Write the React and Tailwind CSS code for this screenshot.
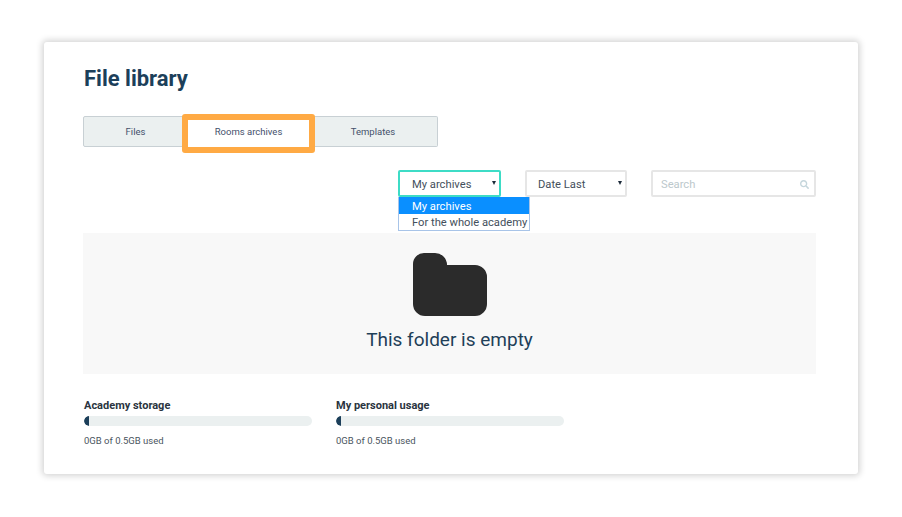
import React from "react";
import { FaSearch } from "react-icons/fa";

const UsageBar = ({ label }) => (
  <div className="w-[228px]">
    <p className="text-[11px] leading-[14px] font-bold text-[#2a3440]">{label}</p>
    <div className="mt-[3px] h-[10px] rounded-full bg-[#ebf0f0] overflow-hidden">
      <div className="h-full w-[5px] bg-[#1c3f5a] rounded-l-full" />
    </div>
    <p className="mt-[9px] text-[9.5px] leading-[12px] text-[#4a5560]">0GB of 0.5GB used</p>
  </div>
);

const Caret = () => (
  <span className="w-0 h-0 mb-[5px] border-x-[2.5px] border-x-transparent border-t-[4px] border-t-[#1c2b3a]" />
);

const App = () => {
  return (
    <div className="w-[902px] h-[517px] bg-white pt-[42px] px-[44px] font-['Roboto',sans-serif]">
      <div className="w-[814px] h-[432px] bg-white rounded-[3px] shadow-[0_0_6px_2px_rgba(0,0,0,0.17)] pl-[39px] pr-[42px] pt-[24px]">
        <h1 className="ml-[1px] text-[22px] leading-[26px] font-bold text-[#1c3f5a]">File library</h1>

        <div className="mt-[24px] flex w-[355px] h-[31px] pt-[1px] text-[9.5px] text-[#44506b]">
          <div className="w-[105px] -mt-[1px] pt-[1px] flex items-center justify-center bg-[#ebf0f0] border border-[#c8d0d4] rounded-l-[2px]">
            Files
          </div>
          <div className="relative w-[121px] flex items-center justify-center bg-white">
            Rooms archives
            <div className="absolute left-[-6px] top-[-3px] w-[133px] h-[39px] border-[6px] border-[#ffaa44] rounded-[3px]" />
          </div>
          <div className="flex-1 -mt-[1px] pt-[1px] flex items-center justify-center bg-[#ebf0f0] border border-l-0 border-[#c8d0d4] rounded-r-[2px]">
            Templates
          </div>
        </div>

        <div className="mt-[23px] flex justify-end gap-[24px] text-[11.2px] text-[#44505c]">
          <div className="relative w-[103px] h-[27px] pl-[12px] pr-[3px] pt-[4px] flex items-center justify-between border-2 border-[#3ddcc6] rounded-[2px]">
            <span>My archives</span>
            <Caret />
            <div className="absolute left-[-2px] top-[25px] w-[132px] bg-white border border-[#a8c4e8] border-t-0 z-10">
              <div className="pl-[13px] pt-[2px] leading-[15px] bg-[#0a8fff] text-white">My archives</div>
              <div className="pl-[13px] pt-[1px] leading-[15px] whitespace-nowrap">For the whole academy</div>
            </div>
          </div>
          <div className="w-[102px] h-[27px] pl-[11px] pr-[3px] pt-[4px] flex items-center justify-between border-2 border-[#e6e6e6] rounded-[2px]">
            <span>Date Last</span>
            <Caret />
          </div>
          <div className="w-[165px] h-[27px] pl-[8px] pr-[5px] pt-[4px] flex items-center justify-between border-2 border-[#e6e6e6] rounded-[2px] text-[#bcc8cc]">
            <span>Search</span>
            <FaSearch className="text-[9px] text-[#c5d6dc] mb-[3px]" />
          </div>
        </div>

        <div className="mt-[36px] h-[141px] bg-[#f8f8f8] flex flex-col items-center pt-[20px]">
          <svg width="74" height="63" viewBox="0 0 74 63">
            <path
              d="M0 11 A11 11 0 0 1 11 0 H22 A12 12 0 0 1 34 12 H62 A12 12 0 0 1 74 24 V51 A12 12 0 0 1 62 63 H12 A12 12 0 0 1 0 51 Z"
              fill="#2b2b2b"
            />
          </svg>
          <p className="mt-[12px] text-[19px] leading-[24px] text-[#1f3f58]">This folder is empty</p>
        </div>

        <div className="mt-[25px] ml-[1px] flex gap-[24px]">
          <UsageBar label="Academy storage" />
          <UsageBar label="My personal usage" />
        </div>
      </div>
    </div>
  );
};

export default App;
